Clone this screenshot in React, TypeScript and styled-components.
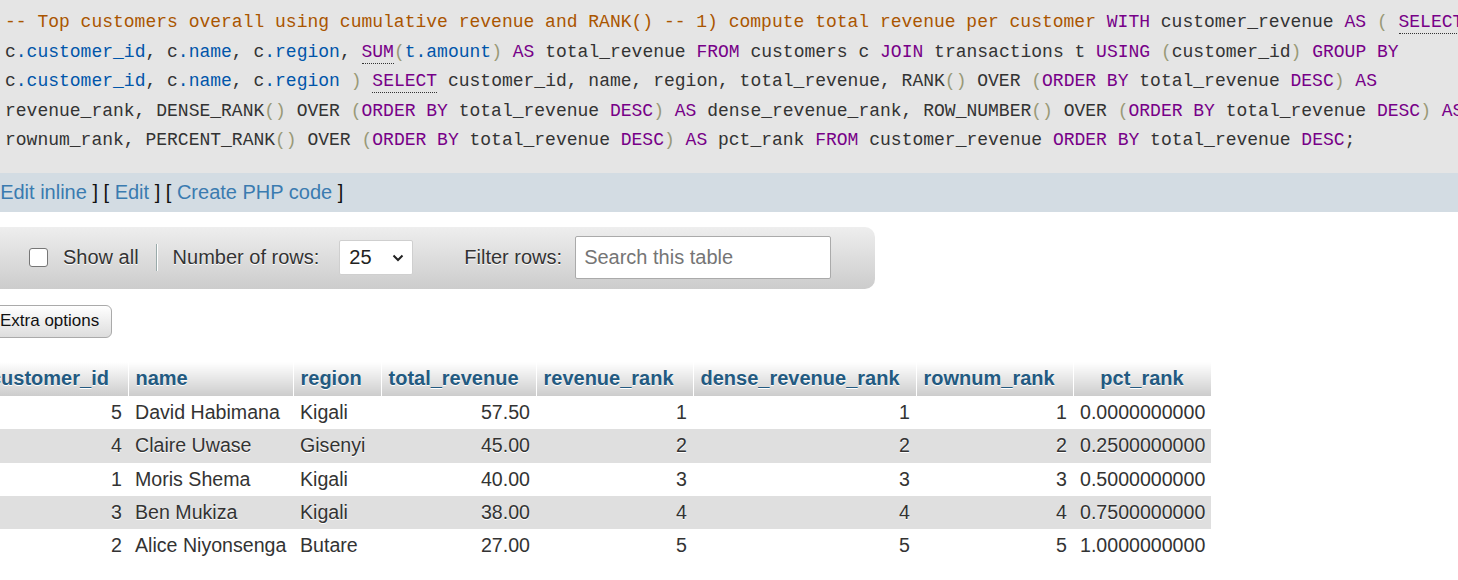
import React from "react";
import styled, { createGlobalStyle } from "styled-components";

const Global = createGlobalStyle`
  html, body { margin: 0; padding: 0; background: #fff; overflow: hidden; }
  body { font-family: "Liberation Sans", Arial, sans-serif; }
`;

const Page = styled.div`
  width: 1458px;
  height: 580px;
  overflow: hidden;
`;

const CodeBlock = styled.pre`
  margin: 0;
  padding: 8px 0 17px 5px;
  background: #e5e5e5;
  font-family: "Liberation Mono", "DejaVu Sans Mono", monospace;
  font-size: 18px;
  line-height: 29.6px;
  color: #333;
  white-space: pre;
  overflow: hidden;
`;

const CodeLine = styled.div`
  height: 29.6px;
`;

type Kind = "p" | "c" | "k" | "kl" | "v" | "b";

const colors: Record<Kind, string> = {
  p: "#333333",
  c: "#aa5500",
  k: "#770088",
  kl: "#770088",
  v: "#0055aa",
  b: "#999977",
};

const Tok = styled.span<{ $k: Kind }>`
  color: ${(p) => colors[p.$k]};
  ${(p) => (p.$k === "kl" ? "border-bottom: 1px dotted #333; padding-bottom: 1px;" : "")}
`;

const code: [Kind, string][][] = [
  [
    ["c", "-- Top customers overall using cumulative revenue and RANK() -- 1) compute total revenue per customer"],
    ["p", " "], ["k", "WITH"], ["p", " customer_revenue "], ["k", "AS"], ["p", " "], ["b", "("], ["p", " "], ["kl", "SELECT"],
  ],
  [
    ["p", "c"], ["v", ".customer_id"], ["p", ", c"], ["v", ".name"], ["p", ", c"], ["v", ".region"], ["p", ", "],
    ["kl", "SUM"], ["b", "("], ["v", "t.amount"], ["b", ")"], ["p", " "], ["k", "AS"], ["p", " total_revenue "],
    ["k", "FROM"], ["p", " customers c "], ["k", "JOIN"], ["p", " transactions t "], ["k", "USING"], ["p", " "],
    ["b", "("], ["p", "customer_id"], ["b", ")"], ["p", " "], ["k", "GROUP BY"],
  ],
  [
    ["p", "c"], ["v", ".customer_id"], ["p", ", c"], ["v", ".name"], ["p", ", c"], ["v", ".region"], ["p", " "],
    ["b", ")"], ["p", " "], ["kl", "SELECT"], ["p", " customer_id, name, region, total_revenue, RANK"], ["b", "()"],
    ["p", " OVER "], ["b", "("], ["k", "ORDER BY"], ["p", " total_revenue "], ["k", "DESC"], ["b", ")"], ["p", " "], ["k", "AS"],
  ],
  [
    ["p", "revenue_rank, DENSE_RANK"], ["b", "()"], ["p", " OVER "], ["b", "("], ["k", "ORDER BY"], ["p", " total_revenue "],
    ["k", "DESC"], ["b", ")"], ["p", " "], ["k", "AS"], ["p", " dense_revenue_rank, ROW_NUMBER"], ["b", "()"], ["p", " OVER "],
    ["b", "("], ["k", "ORDER BY"], ["p", " total_revenue "], ["k", "DESC"], ["b", ")"], ["p", " "], ["k", "AS"],
  ],
  [
    ["p", "rownum_rank, PERCENT_RANK"], ["b", "()"], ["p", " OVER "], ["b", "("], ["k", "ORDER BY"], ["p", " total_revenue "],
    ["k", "DESC"], ["b", ")"], ["p", " "], ["k", "AS"], ["p", " pct_rank "], ["k", "FROM"], ["p", " customer_revenue "],
    ["k", "ORDER BY"], ["p", " total_revenue "], ["k", "DESC"], ["p", ";"],
  ],
];

const Content = styled.div`
  margin-left: -11px;
`;

const LinkBar = styled.div`
  background: #d3dce3;
  height: 39px;
  display: flex;
  align-items: center;
  font-size: 20px;
  color: #111;
  white-space: pre;
`;

const Link = styled.a`
  color: #3a7bb0;
  text-decoration: none;
`;

const Toolbar = styled.div`
  margin-top: 15px;
  width: 886px;
  height: 62px;
  box-sizing: border-box;
  border-radius: 0 10px 10px 0;
  background: linear-gradient(#eeeeee, #cccccc);
  display: flex;
  align-items: center;
  padding-left: 40px;
  font-size: 20px;
  color: #333;
`;

const Check = styled.span`
  width: 19px;
  height: 19px;
  box-sizing: border-box;
  border: 1px solid #767676;
  border-radius: 3px;
  background: #fff;
  margin-right: 15px;
`;

const Label = styled.span`
  text-shadow: 0 1px 0 #fff;
`;

const Sep = styled.span`
  width: 1px;
  height: 27px;
  background: #9aa;
  box-shadow: 1px 0 0 #fff;
  margin: 0 16px 0 17px;
`;

const SelectBox = styled.span`
  width: 74px;
  height: 35px;
  box-sizing: border-box;
  border: 1px solid #cfcfcf;
  border-radius: 2px;
  background: #fff;
  display: flex;
  align-items: center;
  justify-content: space-between;
  padding: 0 8px 0 9px;
  color: #222;
  margin: 0 51px 0 20px;
`;

const SearchInput = styled.span`
  width: 256px;
  height: 43px;
  box-sizing: border-box;
  border: 1px solid #aaa;
  border-radius: 2px;
  background: #fff;
  display: flex;
  align-items: center;
  padding-left: 8px;
  color: #757575;
  margin-left: 13px;
`;

const ExtraButton = styled.button`
  margin-top: 16px;
  height: 33px;
  box-sizing: border-box;
  padding: 0 12px 0 10px;
  font-family: "Liberation Sans", Arial, sans-serif;
  font-size: 17px;
  color: #111;
  border: 1px solid #aaa;
  border-radius: 6px;
  background: linear-gradient(#ffffff, #dddddd);
  display: block;
`;

const Table = styled.table`
  margin-top: 24px;
  width: 1222px;
  border-collapse: collapse;
  table-layout: fixed;
  font-size: 19.6px;
  color: #333;
`;

const Th = styled.th<{ $center?: boolean }>`
  height: 34px;
  padding: 0 7px;
  box-sizing: border-box;
  font-size: 20px;
  font-weight: bold;
  color: #235a81;
  text-align: ${(p) => (p.$center ? "center" : "left")};
  background: linear-gradient(#ffffff, #cccccc);
  border-right: 1px solid #fff;
  text-shadow: 0 1px 0 #fff;
  white-space: nowrap;
  overflow: hidden;
  &:first-child { padding-left: 1px; }
`;

const Tr = styled.tr<{ $even: boolean }>`
  background: ${(p) => (p.$even ? "#dfdfdf" : "#ffffff")};
`;

const Td = styled.td<{ $num?: boolean }>`
  height: 33.3px;
  padding: 0 6px 0 7px;
  text-align: ${(p) => (p.$num ? "right" : "left")};
  white-space: nowrap;
  text-shadow: 0 1px 0 #fff;
`;

const cols = [
  { name: "customer_id", w: 139, num: true },
  { name: "name", w: 165 },
  { name: "region", w: 88 },
  { name: "total_revenue", w: 155, num: true },
  { name: "revenue_rank", w: 157, num: true },
  { name: "dense_revenue_rank", w: 223, num: true },
  { name: "rownum_rank", w: 157, num: true },
  { name: "pct_rank", w: 138, num: false, center: true },
];

const rows = [
  ["5", "David Habimana", "Kigali", "57.50", "1", "1", "1", "0.0000000000"],
  ["4", "Claire Uwase", "Gisenyi", "45.00", "2", "2", "2", "0.2500000000"],
  ["1", "Moris Shema", "Kigali", "40.00", "3", "3", "3", "0.5000000000"],
  ["3", "Ben Mukiza", "Kigali", "38.00", "4", "4", "4", "0.7500000000"],
  ["2", "Alice Niyonsenga", "Butare", "27.00", "5", "5", "5", "1.0000000000"],
];

export default function App() {
  return (
    <Page>
      <Global />
      <CodeBlock>
        {code.map((line, i) => (
          <CodeLine key={i}>
            {line.map(([k, t], j) => (
              <Tok key={j} $k={k}>{t}</Tok>
            ))}
          </CodeLine>
        ))}
      </CodeBlock>
      <Content>
        <LinkBar>
          [ <Link>Edit inline</Link> ] [ <Link>Edit</Link> ] [ <Link>Create PHP code</Link> ]
        </LinkBar>
        <Toolbar>
          <Check />
          <Label>Show all</Label>
          <Sep />
          <Label>Number of rows:</Label>
          <SelectBox>
            <span>25</span>
            <svg width="12" height="8" viewBox="0 0 12 8">
              <polyline points="1.5,1.5 6,6 10.5,1.5" fill="none" stroke="#222" strokeWidth="2" />
            </svg>
          </SelectBox>
          <Label>Filter rows:</Label>
          <SearchInput>Search this table</SearchInput>
        </Toolbar>
        <ExtraButton>Extra options</ExtraButton>
        <Table>
          <colgroup>
            {cols.map((c) => (
              <col key={c.name} style={{ width: c.w }} />
            ))}
          </colgroup>
          <thead>
            <tr>
              {cols.map((c) => (
                <Th key={c.name} $center={c.center}>{c.name}</Th>
              ))}
            </tr>
          </thead>
          <tbody>
            {rows.map((r, i) => (
              <Tr key={i} $even={i % 2 === 1}>
                {r.map((v, j) => (
                  <Td key={j} $num={cols[j].num}>{v}</Td>
                ))}
              </Tr>
            ))}
          </tbody>
        </Table>
      </Content>
    </Page>
  );
}
